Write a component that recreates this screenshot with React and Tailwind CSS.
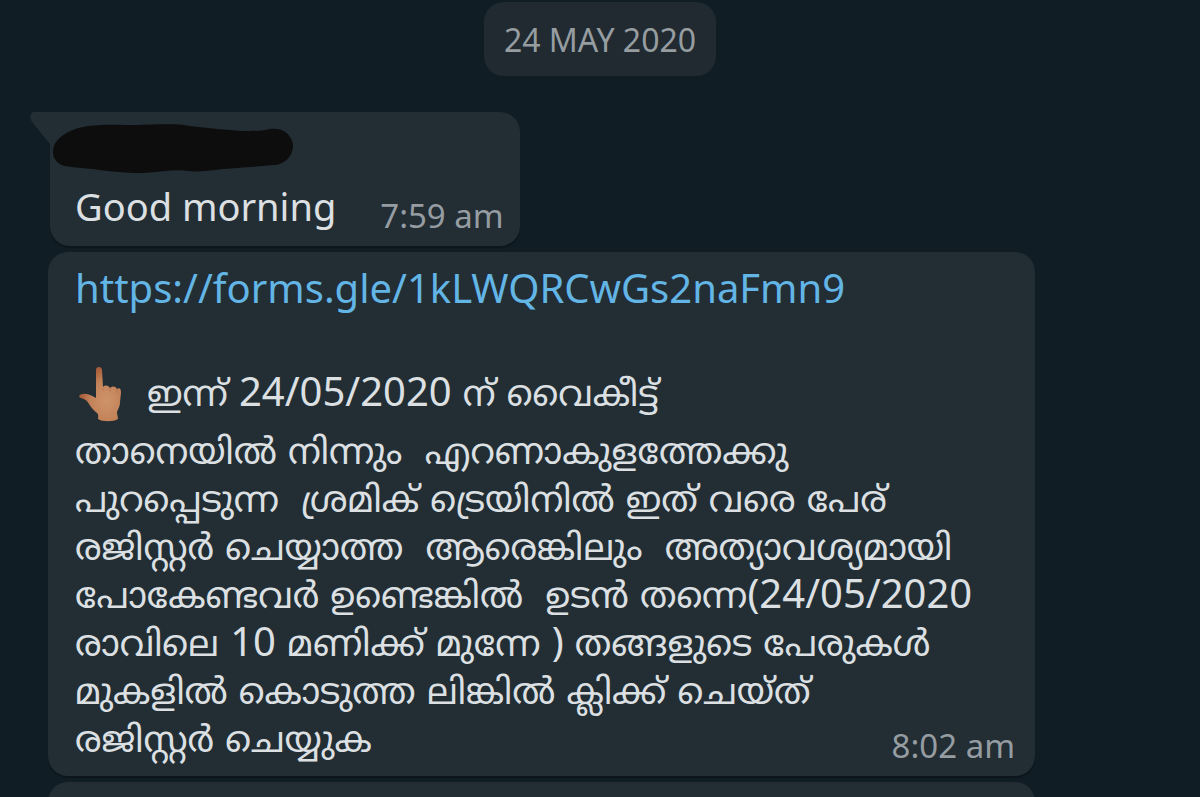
const bodyLines = [
  'താനെയിൽ നിന്നും  എറണാകുളത്തേക്കു',
  'പുറപ്പെടുന്ന  ശ്രമിക് ട്രെയിനിൽ ഇത് വരെ പേര്',
  'രജിസ്റ്റർ ചെയ്യാത്ത  ആരെങ്കിലും  അത്യാവശ്യമായി',
  'പോകേണ്ടവർ ഉണ്ടെങ്കിൽ  ഉടൻ തന്നെ(24/05/2020',
  'രാവിലെ 10 മണിക്ക് മുന്നേ ) തങ്ങളുടെ പേരുകൾ',
  'മുകളിൽ കൊടുത്ത ലിങ്കിൽ ക്ലിക്ക് ചെയ്ത്',
];

// Digits and brackets are set in the Latin face, a little larger
function MixedText({ text }) {
  return text.split(/([0-9/()]+)/).map((part, i) =>
    /^[0-9/()]+$/.test(part) ? (
      <span key={i} className="font-['Noto_Sans',sans-serif] text-[40px] leading-8">{part}</span>
    ) : (
      part
    )
  );
}

function Time({ children }) {
  return <time className="shrink-0 text-[33px] leading-10 text-[#969da2]">{children}</time>;
}

function Tail() {
  return (
    <svg className="absolute -left-5 top-0 h-8 w-10" viewBox="0 0 40 32" fill="#222d34" aria-hidden="true">
      <path d="M4 0H40V32H20L2 10C-1 6 0 0 4 0Z" />
    </svg>
  );
}

function HiddenName() {
  return (
    <svg className="-ml-[23px] h-[50px] w-[242px]" viewBox="0 0 242 50" fill="#0d0d0d" aria-hidden="true">
      <path d="M1 27C2 14 17 5 36 2C55 0 68 1 84 1C104 1 122-1 137 2C157 4 174 6 190 7C203 7 211 7 218 5C231 3 240 11 241 21C241 33 232 41 221 41C199 43 184 44 171 45C156 47 145 48 136 47C124 45 109 48 91 49C73 49 53 47 41 45C29 44 20 43 13 42C6 41 0 34 1 27Z" />
    </svg>
  );
}

function PointingUp() {
  return (
    <svg className="h-14 w-11 shrink-0" viewBox="0 0 44 56" role="img" aria-label="👆🏽">
      <defs>
        <radialGradient id="skin" cx="65%" cy="62%" r="60%">
          <stop offset="0" stopColor="#cf946c" />
          <stop offset="0.65" stopColor="#c28258" />
          <stop offset="1" stopColor="#a95f3b" />
        </radialGradient>
      </defs>
      <path
        d="M17 4C17 0 23 0 23 4L24 21C26 19 29 19 31 22C34 20 36 20 38 23C41 21 42 23 42 27L41 36C41 41 39 43 38 46C38 49 39 50 39 53C35 56 23 56 19 53C19 51 20 49 18 47C14 44 12 41 10 38C8 34 5 33 2 32C-1 31 0 28 4 28C9 27 13 30 17 32Z"
        fill="url(#skin)"
      />
      <path d="M24 22V25M31 22V26M38 23V27" stroke="#ad6b45" strokeOpacity="0.4" fill="none" />
    </svg>
  );
}

export default function App() {
  return (
    <main className="flex h-screen flex-col items-start overflow-hidden bg-[#111d25] pl-12 pr-12 pt-0.5 font-['Noto_Sans',sans-serif] text-[#dce0e3]">
      <div className="self-center rounded-[20px] bg-[#202a30] px-5 pb-4 pt-[18px] text-[32px] leading-10 text-[#969da1]">
        24 MAY 2020
      </div>

      <article className="relative ml-0.5 mt-9 flex flex-col rounded-[20px] rounded-tl-none bg-[#222d34] pb-2.5 pl-[25px] pr-4 pt-3 shadow-[0_2px_1px_#0c161c]">
        <Tail />
        <div className="relative">
          <HiddenName />
        </div>
        <div className="flex items-end gap-11 pt-1.5">
          <p className="pb-1 text-[38px] leading-[52px]">Good morning</p>
          <Time>7:59 am</Time>
        </div>
      </article>

      <article className="mt-1.5 w-full max-w-[987px] shrink-0 rounded-[20px] bg-[#222d34] pb-2 pl-[27px] pr-5 pt-2 shadow-[0_2px_1px_#0c161c]">
        <a href="https://forms.gle/1kLWQRCwGs2naFmn9" className="block text-[40px] leading-[56px] text-[#62b5e5]">
          https://forms.gle/1kLWQRCwGs2naFmn9
        </a>
        <div className="mt-[50px] whitespace-pre-wrap font-['Noto_Sans_Malayalam','Noto_Sans',sans-serif] text-[36px] leading-[48px]">
          <div className="mb-2.5 flex items-end gap-6 pl-1">
            <PointingUp />
            <p><MixedText text="ഇന്ന് 24/05/2020 ന് വൈകീട്ട്" /></p>
          </div>
          {bodyLines.map((line) => (
            <p key={line}><MixedText text={line} /></p>
          ))}
          <div className="flex items-end justify-between">
            <p>രജിസ്റ്റർ ചെയ്യുക</p>
            <div className="flex pb-0.5 font-['Noto_Sans',sans-serif]">
              <Time>8:02 am</Time>
            </div>
          </div>
        </div>
      </article>

      <article className="mt-1.5 h-20 w-full max-w-[987px] shrink-0 rounded-[20px] bg-[#222d34]" />
    </main>
  );
}
